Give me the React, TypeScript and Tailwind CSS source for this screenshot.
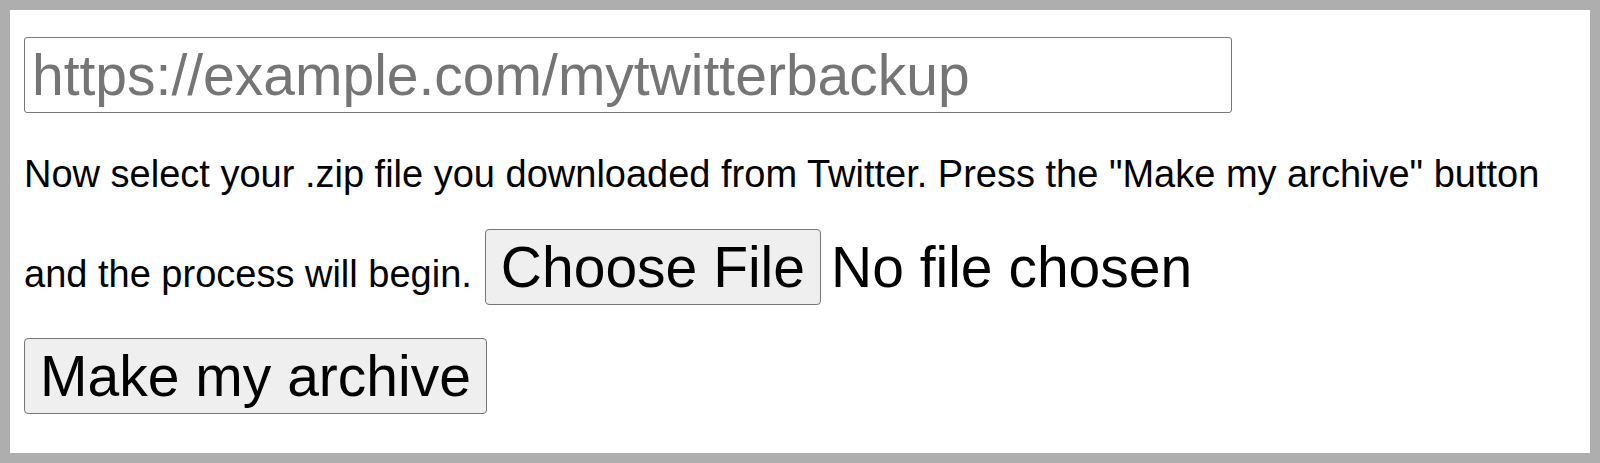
import React from "react";

export default function App() {
  return (
    <div
      className="h-[463px] w-[1600px] border-[10px] border-[#aeaeae] bg-white text-black"
      style={{ fontFamily: '"Liberation Sans", Arial, Helvetica, sans-serif' }}
    >
      <div className="pl-[14px] pt-[27px]">
        <input
          type="text"
          placeholder="https://example.com/mytwitterbackup"
          className="block h-[76px] w-[1208px] rounded-[3px] border border-[#767676] bg-white px-[7px] text-[57px] leading-[74px] text-black outline-none placeholder:text-[#757575]"
        />
        <div className="mt-[39px] text-[38px] leading-[44px]">
          Now select your .zip file you downloaded from Twitter. Press the "Make my archive" button
        </div>
        <div className="mt-[33px] flex items-baseline">
          <span className="text-[38px] leading-[44px]">and the process will begin.</span>
          <button
            type="button"
            className="ml-[13px] h-[76px] rounded-[4px] border border-[#767676] bg-[#efefef] px-[15px] py-0 text-[57px] leading-[74px] text-black"
          >
            Choose File
          </button>
          <span className="ml-[10px] text-[57px] leading-[66px]">No file chosen</span>
        </div>
        <button
          type="button"
          className="mt-[33px] block h-[76px] w-[463px] rounded-[4px] border border-[#767676] bg-[#efefef] px-[13px] py-0 text-[57px] leading-[74px] text-black"
        >
          Make my archive
        </button>
      </div>
    </div>
  );
}
